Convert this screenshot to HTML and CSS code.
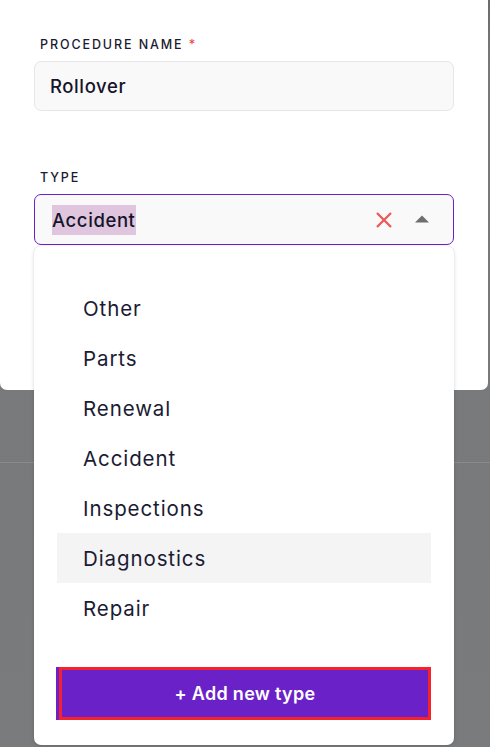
FILE: index.html
```html
<!DOCTYPE html>
<html>
<head>
<meta charset="utf-8">
<link rel="stylesheet" href="styles.css">
</head>
<body>
<div class="backdrop">
  <div class="modal">
    <div class="field">
      <label class="label">PROCEDURE NAME <span class="req">*</span></label>
      <div class="input">Rollover</div>
    </div>
    <div class="field field-type">
      <label class="label">TYPE</label>
      <div class="select-wrap">
        <div class="select">
          <span class="value"><span class="sel">Accident</span></span>
          <svg class="clear" width="16" height="16" viewBox="0 0 16 16"><path d="M1 1L15 15M15 1L1 15" stroke="#f05454" stroke-width="2.2" fill="none"/></svg>
          <svg class="caret" width="16" height="10" viewBox="0 0 16 10"><path d="M1 8.5L8 1.5L15 8.5Z" fill="#6e6e6e"/></svg>
        </div>
        <div class="menu">
          <ul class="options">
            <li class="opt">Other</li>
            <li class="opt">Parts</li>
            <li class="opt">Renewal</li>
            <li class="opt">Accident</li>
            <li class="opt">Inspections</li>
            <li class="opt hover">Diagnostics</li>
            <li class="opt">Repair</li>
          </ul>
          <button class="add">+ Add new type</button>
        </div>
      </div>
    </div>
  </div>
  <div class="bg-divider"></div>
</div>
</body>
</html>
```

FILE: styles.css
```css
* { box-sizing: border-box; }
html, body { margin: 0; padding: 0; }
body {
  width: 490px;
  height: 747px;
  overflow: hidden;
  font-family: "Inter", "Liberation Sans", sans-serif;
  color: #17172e;
  background: #78797b;
}
.backdrop {
  width: 490px;
  height: 747px;
  background: linear-gradient(#6a6b6d 0px, #77787a 60px, #7a7b7d 100%);
  background-color: #78797b;
}
.modal {
  width: 488px;
  height: 390px;
  background: #ffffff;
  border-radius: 0 0 7px 7px;
  padding: 37px 34px 0 34px;
}
.bg-divider {
  margin-top: 72px;
  height: 1px;
  background: #8a8b8d;
}
.field { display: flex; flex-direction: column; }
.field-type { margin-top: 59px; }
.label {
  display: block;
  height: 16px;
  line-height: 16px;
  padding-left: 6px;
  font-size: 12.5px;
  font-weight: 500;
  letter-spacing: 1.9px;
  color: #1a1a30;
  margin-bottom: 8px;
}
.req { color: #ef4444; letter-spacing: 0; }
.input {
  height: 50px;
  background: #f9f9fa;
  border: 1px solid #e6e6e9;
  border-radius: 7px;
  padding-left: 15px;
  display: flex;
  align-items: center;
  font-size: 18.5px;
  font-weight: 500;
  letter-spacing: 0.6px;
  color: #14142a;
}
.select-wrap { position: relative; }
.select {
  height: 51px;
  background: #f9f9fa;
  border: 1px solid #6b21c8;
  border-radius: 7px;
  padding-left: 17px;
  padding-right: 23px;
  display: flex;
  align-items: center;
  font-size: 18.5px;
  font-weight: 500;
  letter-spacing: 0.6px;
  color: #14142a;
}
.value { flex: 1; }
.sel {
  background: #dfc6de;
  padding: 4px 0 4px;
}
.clear { margin-right: 22px; }
.caret { margin-top: -2px; }
.menu {
  position: absolute;
  left: 0;
  right: 0;
  top: 52px;
  height: 499px;
  background: #ffffff;
  border-radius: 7px;
  box-shadow: 0 1px 4px rgba(0,0,0,0.14), 0 0 1px rgba(0,0,0,0.12);
  padding: 37px 23px 0 23px;
}
.options { list-style: none; margin: 0; padding: 0; }
.opt {
  height: 50px;
  display: flex;
  align-items: center;
  padding-left: 26px;
  font-size: 20.5px;
  font-weight: 400;
  letter-spacing: 0.9px;
  color: #1b1b33;
}
.opt.hover { background: #f4f4f5; }
.add {
  display: block;
  margin-top: 34px;
  margin-left: 2px;
  width: 372px;
  height: 53px;
  background: #6b21c8;
  border: 3px solid #f5222d;
  border-radius: 0;
  color: #ffffff;
  font-family: "Inter", "Liberation Sans", sans-serif;
  font-size: 18px;
  font-weight: 600;
  letter-spacing: 0.3px;
  box-shadow: -3px 0 0 0 #6b21c8;
}
```
